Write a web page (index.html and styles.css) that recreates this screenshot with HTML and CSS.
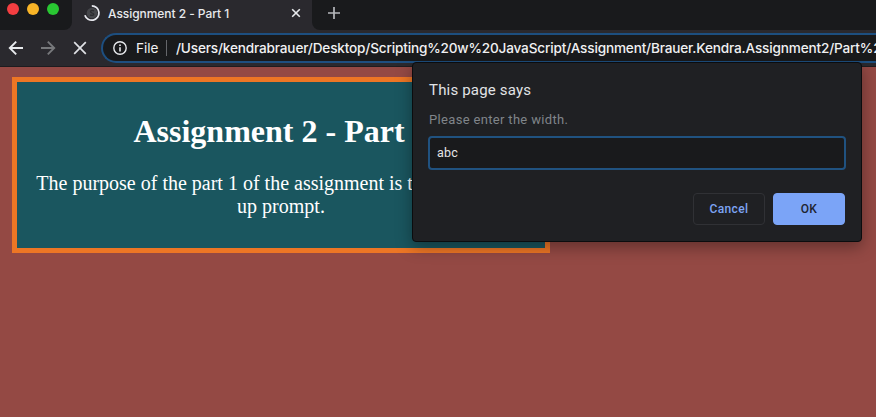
FILE: index.html
```
<!DOCTYPE html>
<html lang="en">
<head>
<meta charset="utf-8">
<title>Assignment 2 - Part 1</title>
<link rel="stylesheet" href="styles.css">
</head>
<body>
<header class="browser">
  <div class="tabs">
    <div class="lights"><i class="red"></i><i class="yellow"></i><i class="green"></i></div>
    <div class="tab">
      <svg class="spinner" width="18" height="18" viewBox="0 0 18 18" fill="none"><circle cx="9" cy="9" r="5.3" fill="#45464a"/><path d="M11 6.8C8 5.5 6 8 9 9s2 3-2 2" stroke="#2b2b2f" stroke-width="1.3"/><path d="M8.8 1.8A7.2 7.2 0 1 1 1.9 11.2" stroke="#e7e8ee" stroke-width="1.8"/></svg>
      <span class="tab-title">Assignment 2 - Part 1</span>
      <svg class="close" width="10" height="10" viewBox="0 0 10 10"><path d="M1.2 1.2l7.6 7.6M8.8 1.2L1.2 8.8" stroke="#e8eaed" stroke-width="1.6"/></svg>
    </div>
    <div class="rest"><svg width="12" height="12" viewBox="0 0 12 12"><path d="M6 0v12M0 6h12" stroke="#b5b7ba" stroke-width="1.7"/></svg></div>
  </div>
  <div class="toolbar">
    <svg class="back" width="16" height="16" viewBox="0 0 16 16" fill="none"><path d="M15 8H2M8.2 1.6L1.8 8l6.4 6.4" stroke="#e8eaed" stroke-width="1.9"/></svg>
    <svg class="forward" width="16" height="16" viewBox="0 0 16 16" fill="none"><path d="M1 8h13M7.8 1.6L14.2 8l-6.4 6.4" stroke="#77787b" stroke-width="1.9"/></svg>
    <svg class="stop" width="14" height="14" viewBox="0 0 14 14"><path d="M1.2 1.2l11.6 11.6M12.8 1.2L1.2 12.8" stroke="#dfe1e5" stroke-width="1.7"/></svg>
    <div class="omnibox">
      <svg width="14" height="14" viewBox="0 0 14 14" fill="none"><circle cx="7" cy="7" r="6.2" stroke="#e8eaed" stroke-width="1.4"/><path d="M7 6.2v4.4M7 3.4v1.6" stroke="#e8eaed" stroke-width="1.6"/></svg>
      <span class="scheme">File</span><i class="divider"></i>
      <span class="url">/Users/kendrabrauer/Desktop/Scripting%20w%20JavaScript/Assignment/Brauer.Kendra.Assignment2/Part%2</span>
    </div>
  </div>
</header>
<main class="page">
  <section class="card">
    <h1>Assignment 2 - Part 1</h1>
    <p>The purpose of the part 1 of the assignment is to show a pop-<br>up prompt.</p>
  </section>
</main>
<form class="dialog">
  <h2>This page says</h2>
  <label for="width">Please enter the width.</label>
  <input id="width" type="text" value="abc">
  <div class="actions"><button class="cancel" type="button">Cancel</button><button class="ok" type="button">OK</button></div>
</form>
</body>
</html>
```
FILE: styles.css
```
* { box-sizing: border-box; }
body {
  margin: 0;
  height: 417px;
  display: flex;
  flex-direction: column;
  overflow: hidden;
  background: #944944;
  font-family: Inter, "Liberation Sans", sans-serif;
}
svg { display: block; flex: none; }
.browser {
  height: 67px;
  flex: none;
  background: #2a292e;
  border-bottom: 1px solid #1d1c1f;
}
.tabs { display: flex; height: 30px; }
.lights {
  width: 72px;
  display: flex;
  gap: 8px;
  padding: 3px 0 0 7px;
  background: #191a1c;
  border-bottom-right-radius: 8px;
}
.lights i { width: 12px; height: 12px; border-radius: 50%; }
.red { background: #f43e41; }
.yellow { background: #f9b527; }
.green { background: #29c732; }
.tab {
  width: 240px;
  height: 26px;
  display: flex;
  align-items: center;
  padding: 0 11px 0 11px;
}
.tab-title {
  margin-left: 7px;
  font-size: 12px;
  font-weight: 500;
  letter-spacing: -.05px;
  color: #e8eaed;
  white-space: nowrap;
}
.close { margin-left: auto; }
.rest {
  flex: 1;
  padding: 7px 0 0 16px;
  background: #191a1c;
  border-bottom-left-radius: 8px;
}
.toolbar { display: flex; align-items: center; height: 36px; padding-left: 8px; }
.forward { margin-left: 16px; }
.stop { margin-left: 17px; }
.omnibox {
  display: flex;
  align-items: center;
  flex: 1;
  min-width: 0;
  height: 30px;
  margin-left: 14px;
  padding-left: 10px;
  border: 2px solid #1d4f80;
  border-right: 0;
  border-radius: 15px 0 0 15px;
  overflow: hidden;
  background: #191a1c;
  color: #f1f1f3;
  font-size: 13.6px;
  white-space: nowrap;
}
.scheme { flex: none; margin-left: 9px; width: 23px; }
.divider { flex: none; width: 1px; height: 16px; margin: 0 9px 0 7px; background: #65666a; }
.url { flex: 1; min-width: 0; overflow: hidden; font-weight: 500; letter-spacing: -.17px; }
.page { flex: 1; padding: 10px 12px; }
.card {
  width: 538px;
  height: 176px;
  padding: 31px 14px 0;
  border: 5px solid #ed7625;
  background: #1a565f;
  color: #fff;
  text-align: center;
  font-family: "Liberation Serif", serif;
}
.card h1 { margin: 0; font-size: 32px; line-height: 36px; }
.card p { margin: 23px 0 0; font-size: 20px; line-height: 23px; white-space: nowrap; }
.dialog {
  position: absolute;
  left: 412px;
  top: 62px;
  width: 450px;
  height: 180px;
  display: flex;
  flex-direction: column;
  padding: 17px 16px 16px;
  border: 1px solid #0b0c0e;
  border-radius: 4px;
  background: #1f2023;
  box-shadow: 0 5px 16px rgba(0, 0, 0, .35);
  font-family: Roboto, sans-serif;
}
.dialog h2 {
  margin: 0;
  color: #e1e3e6;
  font-size: 15px;
  font-weight: 400;
  letter-spacing: .18px;
  line-height: 20px;
}
.dialog label {
  margin-top: 11px;
  color: #80858a;
  font-size: 13px;
  letter-spacing: .33px;
  line-height: 17px;
}
.dialog input {
  width: 418px;
  height: 34px;
  margin: 8px 0 0 -1px;
  padding: 0 7px 2px;
  border: 2px solid #205280;
  border-radius: 4px;
  outline: none;
  background: #191a1c;
  color: #e4e5e7;
  font: 12.5px Roboto, sans-serif;
  letter-spacing: .2px;
}
.actions { display: flex; justify-content: flex-end; gap: 8px; margin-top: 23px; }
.actions button {
  width: 72px;
  height: 32px;
  padding: 0;
  border: 1px solid #303135;
  border-radius: 4px;
  background: transparent;
  color: #7da4f3;
  font: 500 12px Roboto, sans-serif;
  letter-spacing: .4px;
}
.actions .ok { border-color: #7ba4f7; background: #7ba4f7; color: #1f2530; }
```
